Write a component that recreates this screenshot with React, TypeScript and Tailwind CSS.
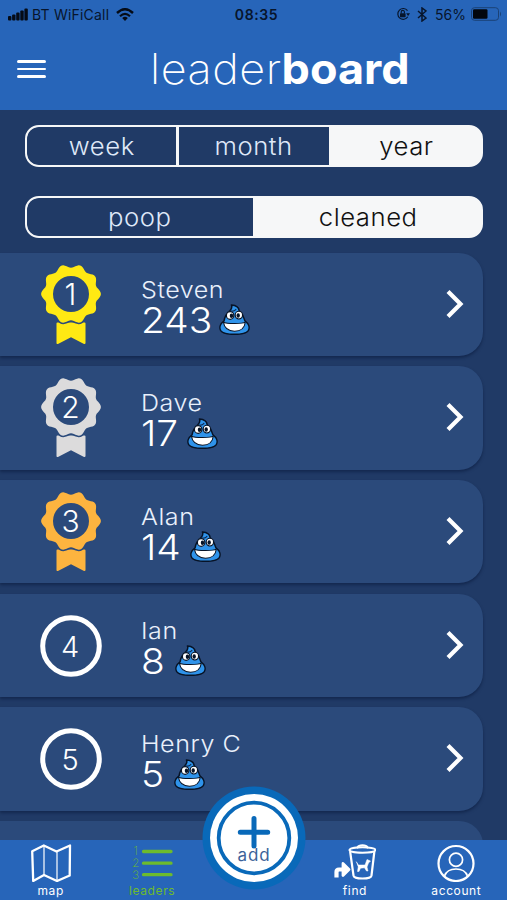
import { useState } from "react";
import type { ReactNode } from "react";

type Player = {
  rank: number;
  name: string;
  score: number;
  medal?: string;
};

const players: Player[] = [
  { rank: 1, name: "Steven", score: 243, medal: "#ffe913" },
  { rank: 2, name: "Dave", score: 17, medal: "#dcdbdc" },
  { rank: 3, name: "Alan", score: 14, medal: "#fdb43f" },
  { rank: 4, name: "Ian", score: 8 },
  { rank: 5, name: "Henry C", score: 5 },
];

// scalloped rosette outline with ten petals, centred on 31,30
const petals =
  Array.from({ length: 120 }, (_, i) => {
    const a = (i / 120) * Math.PI * 2;
    const r = 28.1 + 1.8 * Math.cos(a * 10);
    return `${i ? "L" : "M"}${(31 + r * Math.cos(a)).toFixed(2)} ${(30 + r * Math.sin(a)).toFixed(2)}`;
  }).join("") + "Z";
const rosette = petals + "M49 30a18 18 0 1 0-36 0a18 18 0 1 0 36 0Z";

const Medal = ({ rank, color }: { rank: number; color: string }) => (
  <svg className="h-[82px] w-[62px]" viewBox="0 0 62 82">
    <path
      d="M17.500 59.500H44.500V79L31 72L17.500 79Z"
      fill={color}
      stroke={color}
      strokeWidth="2"
      strokeLinejoin="round"
    />
    <path d={petals} fill="#2b4a7b" stroke="#2b4a7b" strokeWidth="3" />
    <path d={rosette} fill={color} fillRule="evenodd" />
    <text x="30.500" y="41" textAnchor="middle" fontSize="30" fontWeight="300" fill="#fff">
      {rank}
    </text>
  </svg>
);

const RankCircle = ({ rank }: { rank: number }) => (
  <svg className="h-[62px] w-[62px]" viewBox="0 0 62 62">
    <circle cx="31" cy="31" r="28.3" fill="none" stroke="#fff" strokeWidth="5" />
    <text x="30" y="41.500" textAnchor="middle" fontSize="29" fontWeight="300" fill="#fff">
      {rank}
    </text>
  </svg>
);

const Poop = () => (
  <svg className="h-[31px] w-[31px]" viewBox="0 0 92 92">
    <path
      d="M37 3C50 4 59 11 60 20C68 28 74 38 77 50C88 58 92 70 87 79C81 88 64 90 46 90C28 90 11 88 5 79C0 70 4 58 15 50C17 38 22 28 32 20C36 16 40 10 37 3Z"
      fill="#2f93ea"
      stroke="#071326"
      strokeWidth="4.500"
      strokeLinejoin="round"
    />
    <path d="M36 20C42 22 48 20 51 15" fill="none" stroke="#0d2c58" strokeWidth="3.500" />
    <ellipse cx="33" cy="34" rx="11" ry="11.500" fill="#fff" stroke="#071326" strokeWidth="3.500" />
    <ellipse cx="59" cy="33" rx="11" ry="11.500" fill="#fff" stroke="#071326" strokeWidth="3.500" />
    <ellipse cx="37" cy="35" rx="5" ry="6.500" fill="#071326" />
    <ellipse cx="57" cy="34" rx="5" ry="6.500" fill="#071326" />
    <path
      d="M13 54Q20 58 46 58Q72 58 78 54Q75 80 46 81Q17 80 13 54Z"
      fill="#fff"
      stroke="#071326"
      strokeWidth="3"
      strokeLinejoin="round"
    />
  </svg>
);

const PlayerCard = ({ player }: { player: Player }) => (
  <div className="flex h-[103.5px] w-[483px] shrink-0 rounded-r-[24px] bg-[#2b4a7b] shadow-[0_2px_3px_rgba(10,25,60,0.55)]">
    <div className="flex w-[141px] justify-start pl-[40px]">
      {player.medal ? (
        <div className="pt-[11px]">
          <Medal rank={player.rank} color={player.medal} />
        </div>
      ) : (
        <div className="pt-[21px]">
          <RankCircle rank={player.rank} />
        </div>
      )}
    </div>
    <div className="flex-1 pt-[23px]">
      <div className="origin-left scale-x-[1.09] text-[23px] leading-[28px] font-light tracking-[0.5px] text-[#e9f0fb]">
        {player.name}
      </div>
      <div className="flex items-center gap-[12px]">
        <span className="origin-left scale-x-[1.08] text-[36px] leading-[32px] font-[350] text-white">
          {player.score}
        </span>
        <Poop />
      </div>
    </div>
    <svg className="mt-[36px] mr-[18px] h-[30px] w-[20px]" viewBox="0 0 20 30">
      <path d="M4.500 4L15.500 15L4.500 26" fill="none" stroke="#fff" strokeWidth="4.200" strokeLinecap="square" />
    </svg>
  </div>
);

type SegmentsProps = {
  options: string[];
  value: string;
  onChange: (value: string) => void;
};

const Segments = ({ options, value, onChange }: SegmentsProps) => (
  <div className="flex h-[42px] w-[458px] overflow-hidden rounded-[14px] border-[2.5px] border-[#f6f7f8] bg-[#f6f7f8]">
    {options.map((option, i) => (
      <button
        key={option}
        onClick={() => onChange(option)}
        className={`flex-1 pt-[2px] text-[24px] leading-[34px] font-light tracking-[0.5px] ${
          i > 0 ? "border-l-[3px] border-[#f6f7f8]" : "rounded-l-[11px]"
        } ${option === value ? "bg-[#f6f7f8] text-[#111]" : "bg-[#203a66] text-[#dfe8f8]"}`}
      >
        <span className="inline-block scale-x-[1.07]">{option}</span>
      </button>
    ))}
  </div>
);

const StatusBar = () => (
  <div className="flex h-[28px] items-center justify-between pr-[5px] pl-[8px] text-[14px] text-[#07152c]">
    <div className="flex w-[180px] items-center">
      <svg className="h-[13px] w-[20px]" viewBox="0 0 20 13" fill="#050b16">
        <rect x="0" y="8" width="3.400" height="4.500" rx="1" />
        <rect x="4.100" y="6.500" width="3.400" height="6" rx="1" />
        <rect x="8.200" y="4.500" width="3.400" height="8" rx="1" />
        <rect x="12.300" y="2.500" width="3.400" height="10" rx="1" />
        <rect x="16.400" y="0.500" width="3.400" height="12" rx="1" />
      </svg>
      <span className="ml-[4px] tracking-[0.2px]">BT WiFiCall</span>
      <svg className="ml-[7px] h-[13px] w-[18px]" viewBox="0 0 18 13" fill="none" stroke="#050b16">
        <path d="M1 5Q9-2.500 17 5" strokeWidth="2.400" />
        <path d="M4 8.200Q9 3.600 14 8.200" strokeWidth="2.200" />
        <path d="M6.200 10Q9 7.600 11.800 10L9 13Z" fill="#050b16" stroke="none" />
      </svg>
    </div>
    <span className="ml-[3px] font-semibold tracking-[0.6px]">08:35</span>
    <div className="flex w-[180px] items-center justify-end">
      <svg className="h-[14px] w-[14px]" viewBox="0 0 14 14">
        <path d="M11.500 3.600A5.400 5.400 0 1 0 11.800 9.800" fill="none" stroke="#07152c" strokeWidth="1.200" />
        <path d="M10.200 6.200h3.800l-1.900 2.800Z" fill="#07152c" />
        <rect x="4" y="6.200" width="5.600" height="4" rx="0.600" fill="#07152c" />
        <path d="M5.200 6.500V5a1.600 1.600 0 0 1 3.200 0v1.500" fill="none" stroke="#07152c" strokeWidth="1.100" />
      </svg>
      <svg className="ml-[7px] h-[15px] w-[10px]" viewBox="0 0 10 15">
        <path d="M1 4L9 11L5 14V1L9 4L1 11" fill="none" stroke="#07152c" strokeWidth="1.500" />
      </svg>
      <span className="ml-[8px]">56%</span>
      <svg className="ml-[5px] h-[14px] w-[31px]" viewBox="0 0 31 14">
        <rect x="0.500" y="0.700" width="27" height="12.600" rx="3" fill="none" stroke="#1b4276" />
        <rect x="2" y="2.200" width="14.500" height="9.600" rx="1.200" fill="#02060d" />
        <path d="M29 4.500q2 2.500 0 5Z" fill="#1b4276" />
      </svg>
    </div>
  </div>
);

const MapIcon = () => (
  <svg className="h-[38px] w-[42px]" viewBox="0 0 42 38" fill="none" stroke="#fff" strokeLinejoin="round">
    <path
      d="M2.200 7.300L13.800 1.500L26.500 7.500L40 1.500L39.700 31.500L27 37L14 31L3.200 37Z"
      strokeWidth="2.300"
    />
    <path d="M14 2V31M27 8V37" strokeWidth="1.200" />
  </svg>
);

const LeadersIcon = () => (
  <svg className="h-[38px] w-[42px]" viewBox="0 0 42 38" fill="#6dbb2d">
    <g fontSize="11.500" fontWeight="200" textAnchor="middle">
      <text x="5" y="11">1</text>
      <text x="5" y="23">2</text>
      <text x="5" y="35">3</text>
    </g>
    <path d="M12.500 7.500H40M12.500 19.200H40M12.500 30.700H40" stroke="#6dbb2d" strokeWidth="3.300" strokeLinecap="round" />
  </svg>
);

const FindIcon = () => (
  <svg className="h-[38px] w-[42px]" viewBox="0 0 42 38" fill="none" stroke="#fff" strokeLinecap="round" strokeLinejoin="round">
    <ellipse cx="28.500" cy="6" rx="13" ry="2.800" strokeWidth="2" />
    <path d="M23.500 3.500Q24.500 1.300 28.500 1.300Q32.500 1.300 33.500 3.500" strokeWidth="2" />
    <path d="M16.200 8L19.500 31.500Q20 34.500 28.500 34.500Q37 34.500 37.500 31.500L40.300 8" strokeWidth="2.200" />
    <path
      d="M22.500 18L24.500 21H31L33 15.500L36.500 17L34.500 19L33 23L34 27H32.500L30.500 23.800L26.500 24.200L25 27.500H23.500L24.200 23Z"
      fill="#fff"
      strokeWidth="0.500"
    />
    <path d="M2.500 33.500V28Q2.500 25.500 5 25.500H10" strokeWidth="4.200" strokeLinecap="butt" />
    <path d="M9 19.500L15 25.500L9 31.500Z" strokeWidth="2.800" fill="#fff" />
  </svg>
);

const AccountIcon = () => (
  <svg className="h-[38px] w-[42px]" viewBox="0 0 42 38" fill="none" stroke="#fff">
    <circle cx="21" cy="19.500" r="17.500" strokeWidth="2.200" />
    <circle cx="21" cy="15.800" r="6.600" strokeWidth="1.700" />
    <path d="M9.500 32Q12 25 21 25Q30 25 32.500 32" strokeWidth="1.700" />
  </svg>
);

const Tab = ({ label, active, children }: { label: string; active?: boolean; children?: ReactNode }) => (
  <button
    className={`flex flex-1 flex-col items-center pt-[4px] text-[12px] leading-[14px] tracking-[0.6px] ${
      active ? "text-[#6dbb2d]" : "text-white"
    }`}
  >
    {children}
    <span className="mt-[2px]">{label}</span>
  </button>
);

const AddButton = () => (
  <button className="absolute -top-[54px] left-1/2 h-[104px] w-[104px] -translate-x-1/2">
    <svg className="h-full w-full" viewBox="0 0 104 104">
      <circle cx="52" cy="52" r="51.500" fill="#0969b9" />
      <circle cx="52" cy="52" r="44" fill="#fff" />
      <circle cx="52" cy="52" r="35.300" fill="none" stroke="#0969b9" strokeWidth="3.800" />
      <path d="M52 32.500V60M38.300 46.200H65.700" stroke="#0969b9" strokeWidth="5" strokeLinecap="round" />
      <text x="52" y="75" textAnchor="middle" fontSize="17" letterSpacing="0.8" fill="#3c6299">
        add
      </text>
    </svg>
  </button>
);

export default function App() {
  const [period, setPeriod] = useState("year");
  const [kind, setKind] = useState("cleaned");

  return (
    <div className="flex h-[900px] w-[507px] flex-col overflow-hidden bg-[#203a66] font-[Inter,sans-serif]">
      <header className="h-[110px] shrink-0 bg-[#2765b9]">
        <StatusBar />
        <div className="flex h-[82px] items-center">
          <button className="ml-[17px] flex w-[29px] flex-col gap-[4.500px]">
            <span className="h-[2.700px] rounded-full bg-white" />
            <span className="h-[2.700px] rounded-full bg-white" />
            <span className="h-[2.700px] rounded-full bg-white" />
          </button>
          <h1 className="ml-[104px] origin-left scale-x-[1.07] text-[42px] leading-[50px] font-extralight tracking-[0.5px] text-white">
            leader<span className="font-bold tracking-normal">board</span>
          </h1>
        </div>
      </header>

      <main className="flex min-h-0 flex-1 flex-col overflow-hidden">
        <div className="flex shrink-0 flex-col gap-[29px] pt-[15px] pl-[25px]">
          <Segments options={["week", "month", "year"]} value={period} onChange={setPeriod} />
          <Segments options={["poop", "cleaned"]} value={kind} onChange={setKind} />
        </div>
        <div className="mt-[14.500px] flex flex-col gap-[10.200px]">
          {players.map((player) => (
            <PlayerCard key={player.rank} player={player} />
          ))}
          {/* next row, still scrolled below the tab bar */}
          <div className="h-[103.5px] w-[483px] shrink-0 rounded-r-[24px] bg-[#2b4a7b]" />
        </div>
      </main>

      <nav className="relative flex h-[60px] shrink-0 bg-[#2765b9]">
        <Tab label="map">
          <MapIcon />
        </Tab>
        <Tab label="leaders" active>
          <LeadersIcon />
        </Tab>
        <div className="flex-1" />
        <Tab label="find">
          <FindIcon />
        </Tab>
        <Tab label="account">
          <AccountIcon />
        </Tab>
        <AddButton />
      </nav>
    </div>
  );
}
